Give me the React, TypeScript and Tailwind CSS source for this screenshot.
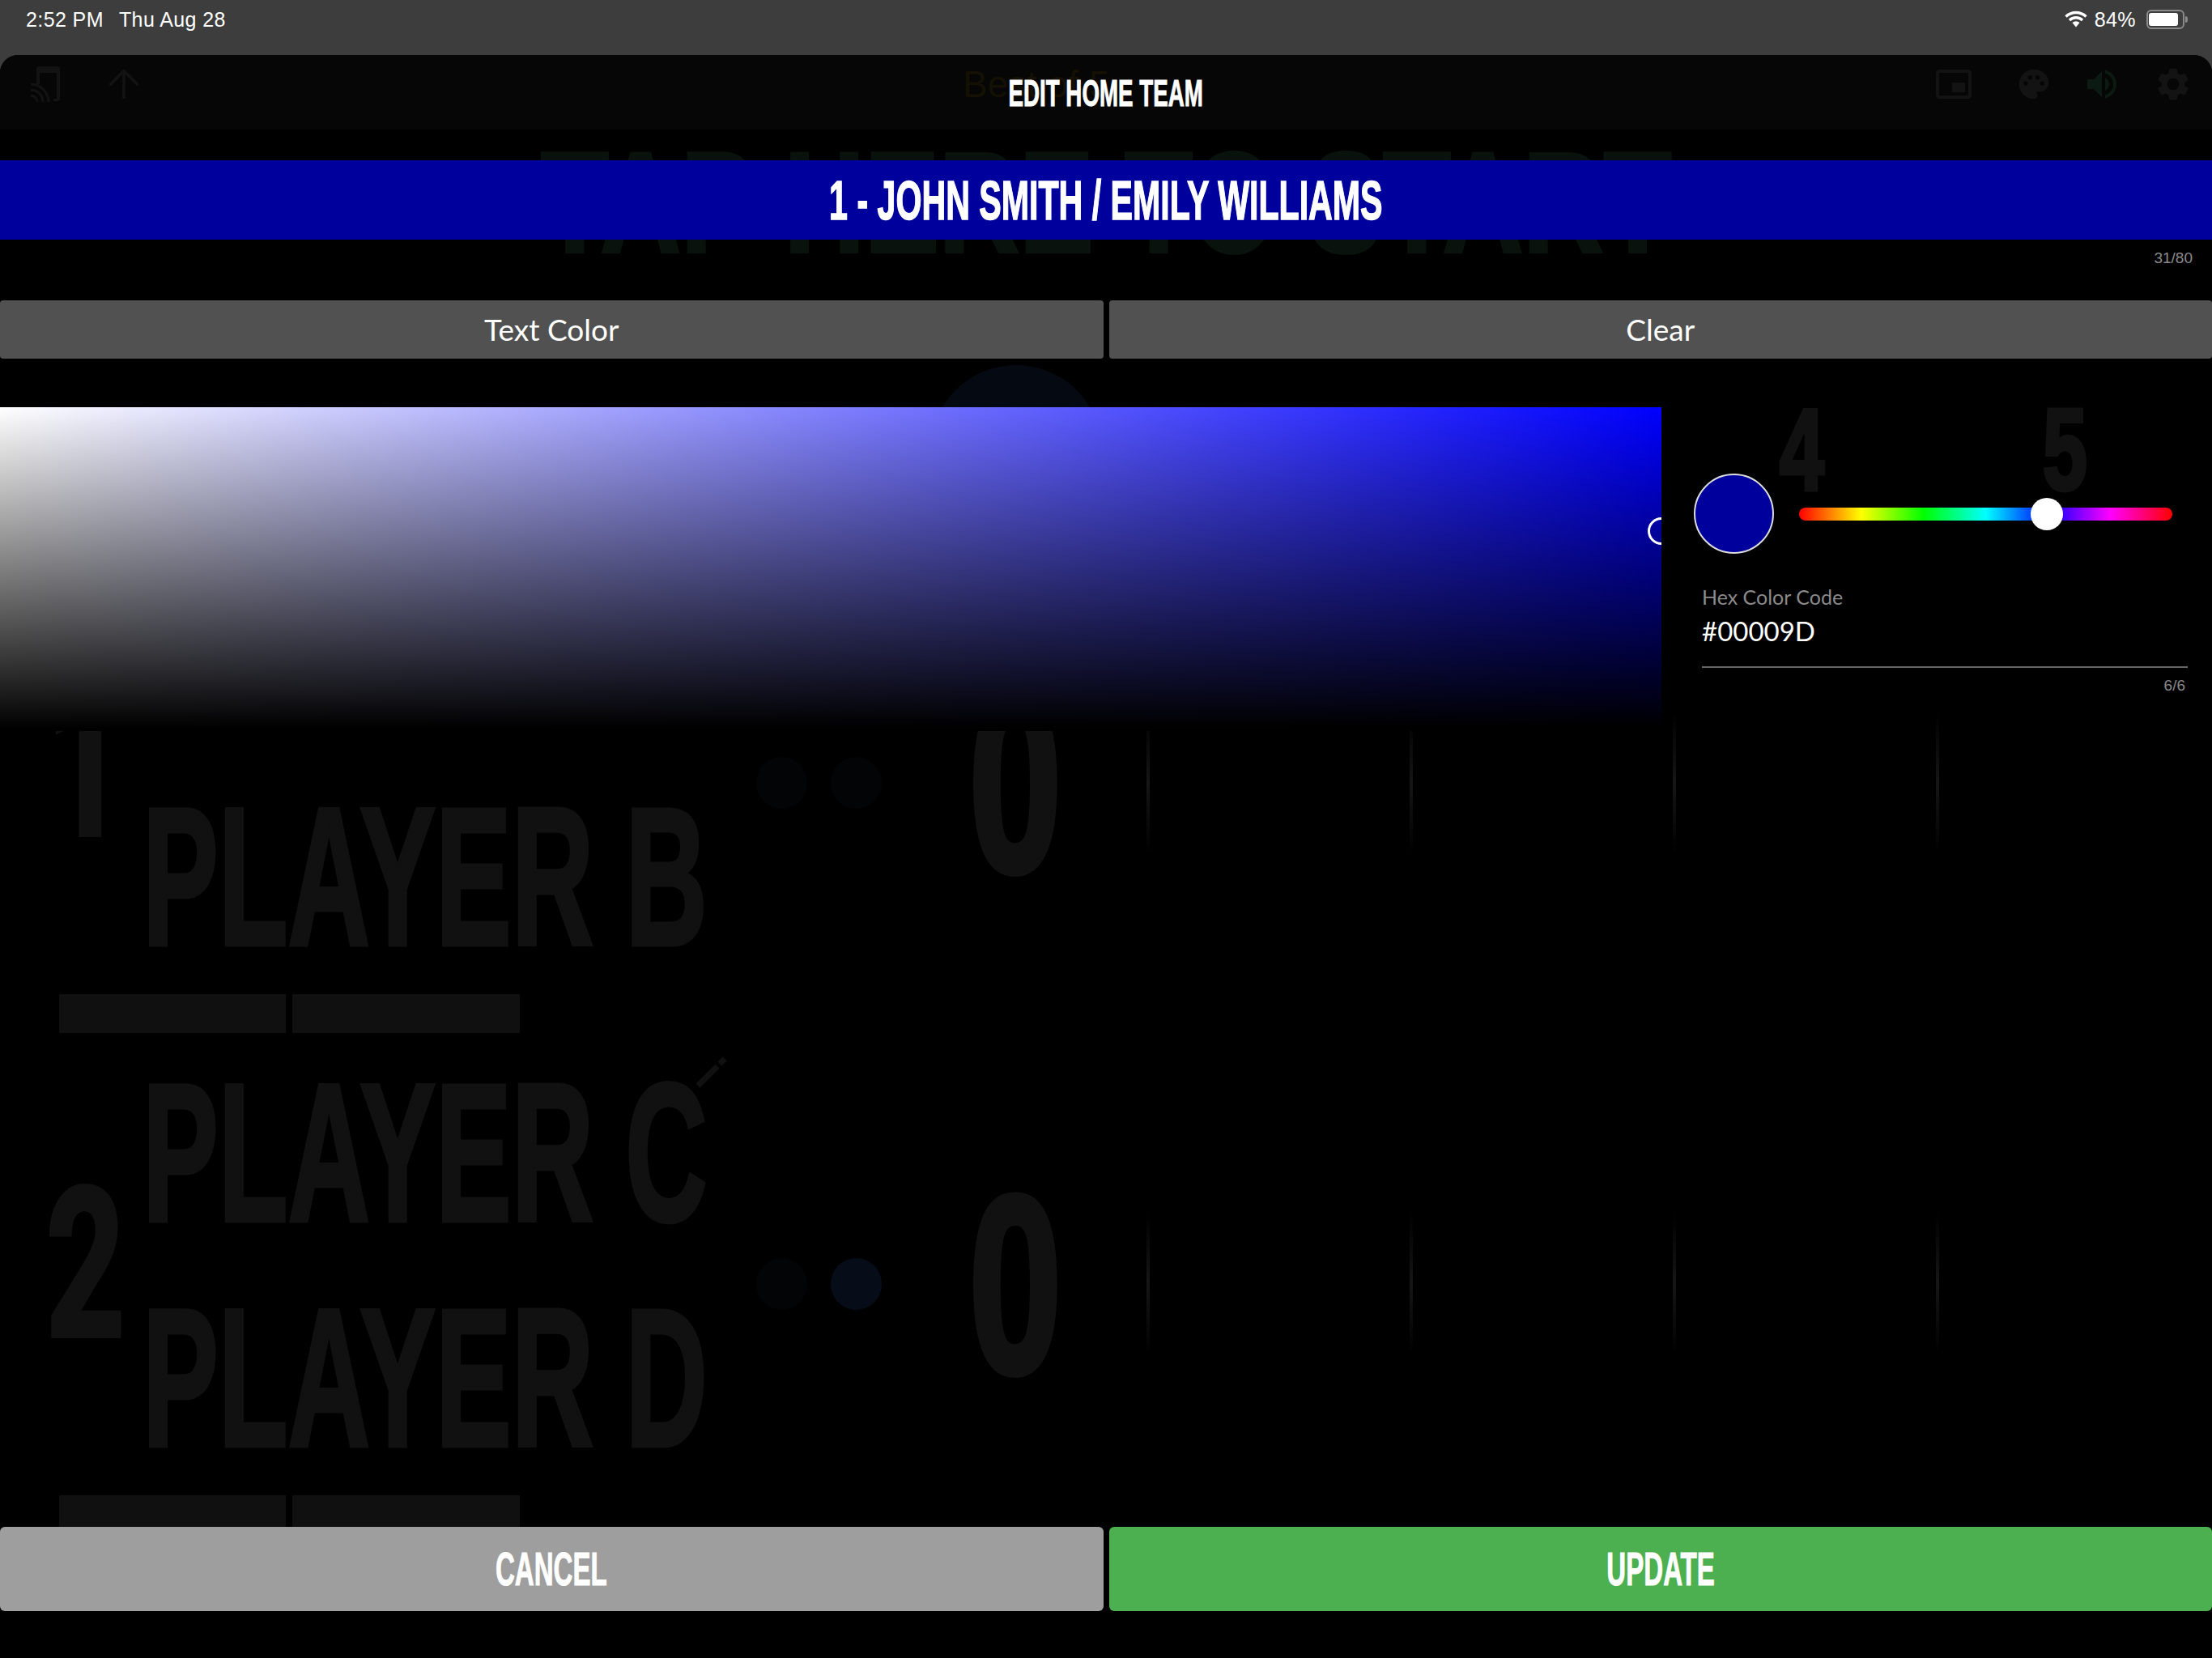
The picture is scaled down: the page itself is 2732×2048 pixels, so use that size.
import { ReactNode } from 'react';
import { MdPalette, MdPictureInPictureAlt, MdSettings, MdVolumeUp } from 'react-icons/md';
import { ArrowUp } from 'lucide-react';

type CondProps = { children: ReactNode; className?: string };

// Squeezed bold type, the app's headline font is not installed
const Cond = ({ children, className = "font-['Liberation_Sans',sans-serif]" }: CondProps) => (
  <span className={`block shrink-0 whitespace-nowrap font-bold ${className}`}>
    {children}
  </span>
);

const CastIcon = () => (
  <svg width="36" height="44" viewBox="0 0 36 44" className="mt-[14px] ml-[38px] text-[#131313]">
    <path fill="currentColor" d="M10 0h23a3 3 0 0 1 3 3v37a3 3 0 0 1-3 3h-5v-3h4V8H11v14H7V3a3 3 0 0 1 3-3z" />
    <g fill="none" stroke="currentColor" strokeWidth="3">
      <path d="M0 36a8 8 0 0 1 8 8" />
      <path d="M0 29a15 15 0 0 1 15 15" />
      <path d="M0 22a22 22 0 0 1 22 22" />
    </g>
  </svg>
);

const WifiIcon = () => (
  <svg width="28" height="22" viewBox="0 0 28 22" className="mr-[9px] mt-[3px]">
    <g fill="none" stroke="#fff" strokeWidth="3.4">
      <path d="M1.5 7.5a18 18 0 0 1 25 0" />
      <path d="M6 12a11.5 11.5 0 0 1 16 0" />
    </g>
    <path fill="#fff" d="M9.5 15a6.5 6.5 0 0 1 9 0L14 20.5z" />
  </svg>
);

const StatusBar = () => (
  <div className="flex h-[68px] shrink-0 justify-between pl-[32px] pr-[30px] pt-[10px] font-['Liberation_Sans',sans-serif] text-[25px] leading-[28px] tracking-[0.4px] text-white">
    <div className="flex">
      <span>2:52 PM</span>
      <span className="ml-[19px]">Thu Aug 28</span>
    </div>
    <div className="flex items-start">
      <WifiIcon />
      <span>84%</span>
      <div className="ml-[13px] mt-[2px] flex items-center">
        <div className="flex h-[24px] w-[47px] items-center rounded-[6px] border-2 border-[#8a8a8a] px-[1px]">
          <div className="h-[16px] w-[36px] rounded-[3px] bg-white" />
        </div>
        <div className="ml-[1px] h-[8px] w-[3px] rounded-r-full bg-[#8a8a8a]" />
      </div>
    </div>
  </div>
);

const GhostHeader = () => (
  <div className="flex h-[92px] items-start bg-[#060606]">
    <CastIcon />
    <ArrowUp size={56} strokeWidth={1.6} className="mt-[8px] ml-[51px] text-[#131313]" />
    <span className="ml-[1008px] mt-[11px] font-['Liberation_Sans',sans-serif] text-[46px] leading-[50px] text-[#141003]">
      Best of 5
    </span>
    <div className="ml-auto mr-[24px] mt-[12px] flex text-[#131313]">
      <MdPictureInPictureAlt size={48} />
      <MdPalette size={44} className="ml-[53px] mt-[2px]" />
      <MdVolumeUp size={48} className="ml-[38px] text-[#0c1a14]" />
      <MdSettings size={48} className="ml-[40px]" />
    </div>
  </div>
);

const SetNumber = ({ value, className }: { value: string; className: string }) => (
  <div className={`mt-[54px] flex w-[60px] justify-center ${className}`}>
    <Cond className="h-[102px] scale-x-[0.7] font-['Liberation_Sans',sans-serif] text-[142px] leading-[102px] text-[#111111] [-webkit-text-stroke:5px_#111111]">
      {value}
    </Cond>
  </div>
);

const GhostBanner = () => (
  <div className="h-[521px]">
    <div className="flex justify-center pt-[27px]">
      <Cond className="h-[126px] scale-x-[0.782] font-['Liberation_Sans',sans-serif] text-[176px] leading-[126px] text-[#0a120d] [-webkit-text-stroke:4px_#0a120d]">
        TAP HERE TO START
      </Cond>
    </div>
    <div className="mt-[138px] flex">
      <div className="ml-[1149px] size-[212px] rounded-full bg-[#050a12]" />
      <SetNumber value="4" className="ml-[834px]" />
      <SetNumber value="5" className="ml-[265px]" />
    </div>
  </div>
);

const SetDivider = () => (
  <div className="mt-[198px] h-[175px] w-[325px]">
    <div className="h-full w-[4px] bg-[linear-gradient(to_bottom,transparent,#161616,transparent)]" />
  </div>
);

type TeamProps = {
  rank: string;
  players: [string, string];
  dots: [string, string];
  edit?: boolean;
};

const TeamRow = ({ rank, players, dots, edit }: TeamProps) => (
  <div className="relative h-[619px]">
    {edit && (
      <svg width="38" height="38" viewBox="0 0 38 38" className="absolute left-[860px] top-[6px]">
        <path d="M2 35 L26 11" stroke="#111111" strokeWidth="7" />
        <path d="M29 8 L35 2" stroke="#111111" strokeWidth="7" />
      </svg>
    )}
    <div className="flex h-[547px]">
      <div className="mt-[171px] flex w-[183px] justify-center pl-[27px]">
        <Cond className="h-[183px] scale-x-[0.66] font-['Roboto',sans-serif] text-[256px] leading-[183px] text-[#111111] [-webkit-text-stroke:6px_#111111]">
          {rank}
        </Cond>
      </div>
      <div className="-ml-[7px] mt-[36px] flex w-[758px] flex-col gap-[103px]">
        {players.map(name => (
          <Cond key={name} className="h-[175px] origin-left scale-x-[0.576] font-['Liberation_Sans',sans-serif] text-[244px] leading-[175px] text-[#111111] [-webkit-text-stroke:5px_#111111]">
            {name}
          </Cond>
        ))}
      </div>
      <div className="mt-[254px] flex h-[64px] w-[155px] gap-[29px]">
        {dots.map((color, i) => (
          <div key={i} className={`h-[64px] w-[63px] rounded-full ${color}`} />
        ))}
      </div>
      <div className="ml-[113px] mt-[175px] flex w-[105px] justify-center">
        <Cond className="h-[224px] scale-x-[0.66] font-['Liberation_Sans',sans-serif] text-[313px] leading-[224px] text-[#111111] [-webkit-text-stroke:8px_#111111]">
          0
        </Cond>
      </div>
      <div className="ml-[109px] flex">
        <SetDivider />
        <SetDivider />
        <SetDivider />
        <SetDivider />
      </div>
    </div>
    <div className="ml-[73px] flex gap-[8px]">
      <div className="h-[48px] w-[280px] bg-[#101010]" />
      <div className="h-[48px] w-[281px] bg-[#101010]" />
    </div>
  </div>
);

const ColorPicker = () => (
  <div className="mt-[60px] flex h-[400px]">
    <div className="relative h-full w-[2052px] overflow-hidden bg-black">
      <div className="h-[397px] bg-[linear-gradient(to_top,#000,transparent),linear-gradient(to_right,#fff,#00f)]" />
      <div className="absolute left-[2035px] top-[136px] size-[34px] rounded-full border-[3px] border-white" />
    </div>
    <div className="flex-1">
      <div className="flex items-center pl-[40px] pt-[82px]">
        <div className="size-[99px] rounded-full border-2 border-[#dddddd] bg-[#00009d]" />
        <div className="relative ml-[31px] h-[16px] w-[461px] rounded-full bg-[linear-gradient(to_right,#f00,#ff0,#0f0,#0ff,#00f,#f0f,#f00)]">
          <div className="absolute left-[286px] top-[-12px] size-[40px] rounded-full bg-white" />
        </div>
      </div>
      <div className="pl-[50px] pr-[30px] pt-[39px] font-['Lato',sans-serif]">
        <div className="text-[25px] leading-[28px] text-[#8a8a8a]">Hex Color Code</div>
        <div className="mt-[9px] text-[33px] leading-[38px] text-white">#00009D</div>
        <div className="mt-[25px] h-[2px] bg-[#666666]" />
        <div className="mt-[12px] pr-[3px] text-right font-['Liberation_Sans',sans-serif] text-[19px] leading-[20px] text-[#8a8a8a]">6/6</div>
      </div>
    </div>
  </div>
);

const Modal = () => (
  <div className="absolute inset-0 flex flex-col">
    <div className="flex h-[94px] items-center justify-center">
      <Cond className="h-[34px] scale-x-[0.59] font-['Liberation_Sans',sans-serif] text-[47px] leading-[34px] text-white [-webkit-text-stroke:1px_#fff]">EDIT HOME TEAM</Cond>
    </div>
    <div className="mt-[36px] flex h-[98px] items-center justify-center bg-[#00009d]">
      <Cond className="h-[49px] scale-x-[0.605] font-['Liberation_Sans',sans-serif] text-[68px] leading-[49px] text-white [-webkit-text-stroke:1.5px_#fff]">1 - JOHN SMITH / EMILY WILLIAMS</Cond>
    </div>
    <div className="flex h-[75px] justify-end pr-[24px] pt-[13px] font-['Liberation_Sans',sans-serif] text-[19px] leading-[20px] text-[#8a8a8a]">
      31/80
    </div>
    <div className="flex h-[72px] gap-[7px] font-['Lato',sans-serif] text-[37px] text-white">
      <button className="flex-1 rounded-[4px] bg-[#515151]">Text Color</button>
      <button className="flex-1 rounded-[4px] bg-[#515151]">Clear</button>
    </div>
    <ColorPicker />
    <div className="mb-[58px] mt-auto flex h-[104px] gap-[7px]">
      <button className="flex flex-1 items-center justify-center rounded-[6px] bg-[#9e9e9e]">
        <Cond className="h-[42px] scale-x-[0.57] font-['Liberation_Sans',sans-serif] text-[58px] leading-[42px] text-white [-webkit-text-stroke:1px_#fff]">CANCEL</Cond>
      </button>
      <button className="flex flex-1 items-center justify-center rounded-[6px] bg-[#4caf50]">
        <Cond className="h-[42px] scale-x-[0.57] font-['Liberation_Sans',sans-serif] text-[58px] leading-[42px] text-white [-webkit-text-stroke:1px_#fff]">UPDATE</Cond>
      </button>
    </div>
  </div>
);

export default function App() {
  return (
    <div className="flex h-[2048px] w-[2732px] flex-col overflow-hidden bg-[#3d3d3d]">
      <StatusBar />
      <div className="relative flex-1 overflow-hidden rounded-t-[22px] bg-black">
        {/* dimmed scoreboard behind the edit sheet */}
        <GhostHeader />
        <GhostBanner />
        <TeamRow rank="1" players={['PLAYER A', 'PLAYER B']} dots={['bg-[#030406]', 'bg-[#030406]']} />
        <TeamRow rank="2" players={['PLAYER C', 'PLAYER D']} dots={['bg-[#030406]', 'bg-[#060c18]']} edit />
        <Modal />
      </div>
    </div>
  );
}
